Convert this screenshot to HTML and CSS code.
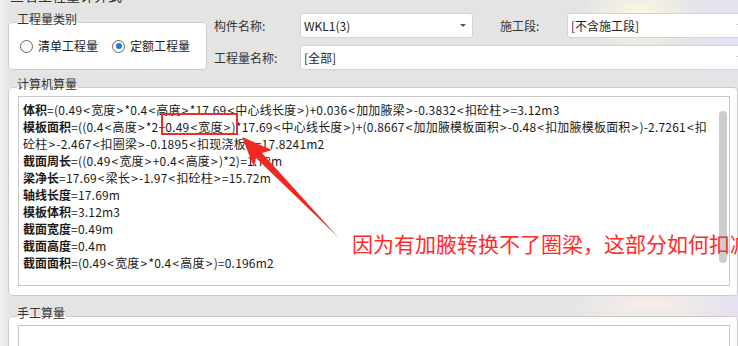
FILE: index.html
```html
<!DOCTYPE html>
<html lang="zh-CN">
<head>
<meta charset="utf-8">
<title>查看工程量计算式</title>
<link rel="stylesheet" href="styles.css">
</head>
<body>
<div class="page">
  <div class="title"><span>查看工程量计算式</span></div>
  <div class="top">
    <fieldset class="group type-group">
      <legend>工程量类别</legend>
      <div class="radios">
        <label class="radio"><span class="dot"></span>清单工程量</label>
        <label class="radio checked"><span class="dot"></span>定额工程量</label>
      </div>
    </fieldset>
    <div class="form">
      <span class="lbl">构件名称:</span>
      <div class="select"><span>WKL1(3)</span><i class="caret"></i></div>
      <span class="lbl lbl-gap">施工段:</span>
      <div class="select"><span>[不含施工段]</span><i class="caret"></i></div>
      <span class="lbl">工程量名称:</span>
      <div class="select wide"><span>[全部]</span><i class="caret"></i></div>
    </div>
  </div>

  <fieldset class="group calc">
    <legend>计算机算量</legend>
    <div class="textbox">
      <div class="lines">
        <div class="line"><b>体积</b>=(0.49<span class="ang">&lt;</span>宽度<span class="ang">&gt;</span>*0.4<span class="ang">&lt;</span>高度<span class="ang">&gt;</span>*17.69<span class="ang">&lt;</span>中心线长度<span class="ang">&gt;</span>)+0.036<span class="ang">&lt;</span>加加腋梁<span class="ang">&gt;</span>-0.3832<span class="ang">&lt;</span>扣砼柱<span class="ang">&gt;</span>=3.12m3</div>
        <div class="line"><b>模板面积</b>=((0.4<span class="ang">&lt;</span>高度<span class="ang">&gt;</span>*2+0.49<span class="ang">&lt;</span>宽度<span class="ang">&gt;</span>)*17.69<span class="ang">&lt;</span>中心线长度<span class="ang">&gt;</span>)+(0.8667<span class="ang">&lt;</span>加加腋模板面积<span class="ang">&gt;</span>-0.48<span class="ang">&lt;</span>扣加腋模板面积<span class="ang">&gt;</span>)-2.7261<span class="ang">&lt;</span>扣</div>
        <div class="line">砼柱<span class="ang">&gt;</span>-2.467<span class="ang">&lt;</span>扣圈梁<span class="ang">&gt;</span>-0.1895<span class="ang">&lt;</span>扣现浇板<span class="ang">&gt;</span>=17.8241m2</div>
        <div class="line"><b>截面周长</b>=((0.49<span class="ang">&lt;</span>宽度<span class="ang">&gt;</span>+0.4<span class="ang">&lt;</span>高度<span class="ang">&gt;</span>)*2)=1.78m</div>
        <div class="line"><b>梁净长</b>=17.69<span class="ang">&lt;</span>梁长<span class="ang">&gt;</span>-1.97<span class="ang">&lt;</span>扣砼柱<span class="ang">&gt;</span>=15.72m</div>
        <div class="line"><b>轴线长度</b>=17.69m</div>
        <div class="line"><b>模板体积</b>=3.12m3</div>
        <div class="line"><b>截面宽度</b>=0.49m</div>
        <div class="line"><b>截面高度</b>=0.4m</div>
        <div class="line"><b>截面面积</b>=(0.49<span class="ang">&lt;</span>宽度<span class="ang">&gt;</span>*0.4<span class="ang">&lt;</span>高度<span class="ang">&gt;</span>)=0.196m2</div>
      </div>
      <div class="track"><div class="thumb"></div></div>
    </div>
  </fieldset>

  <fieldset class="group manual">
    <legend>手工算量</legend>
    <div class="textbox tall"></div>
  </fieldset>

  <svg class="markup" width="738" height="346" viewBox="0 0 738 346">
    <rect x="162" y="114" width="75" height="20" fill="none" stroke="#e8302a" stroke-width="2"/>
    <polygon points="242,137 272,150 262,153 338,237 256,158 254,167" fill="#f02a22"/>
  </svg>
  <div class="note">因为有加腋转换不了圈梁，这部分如何扣减</div>
</div>
</body>
</html>
```

FILE: styles.css
```css
* { box-sizing: border-box; }

html, body {
  margin: 0;
  padding: 0;
  width: 738px;
  height: 346px;
  overflow: hidden;
}

body {
  font-family: "Noto Sans CJK SC", "Noto Sans", sans-serif;
  font-size: 12px;
  color: #222;
  background:
    radial-gradient(60px 40px at 640px 15px, rgba(255, 250, 225, 0.9), rgba(255, 250, 225, 0)),
    radial-gradient(70px 60px at 730px 30px, rgba(228, 226, 250, 0.9), rgba(228, 226, 250, 0)),
    radial-gradient(90px 20px at 650px 305px, rgba(250, 240, 235, 0.9), rgba(250, 240, 235, 0)),
    radial-gradient(50px 20px at 735px 305px, rgba(232, 222, 250, 0.9), rgba(232, 222, 250, 0)),
    linear-gradient(90deg, #f2f2f2 0, #e4e4e4 10px, #e4e4e4 100%);
}

.page {
  position: relative;
  width: 760px;
  height: 346px;
  padding-left: 8px;
}

.title {
  height: 13px;
  overflow: hidden;
}
.title span {
  display: block;
  margin-top: -12px;
  padding-left: 2px;
  font-size: 14px;
  line-height: 15px;
  color: #333;
}

.top {
  display: flex;
  gap: 7px;
  align-items: flex-start;
}

.group {
  margin: 0;
  min-width: 0;
  border: 1px solid #cbcbcb;
  border-radius: 4px;
  background: #fff;
  padding: 0 7px 9px 9px;
}
.group legend {
  padding: 0 1px 6px 0;
  margin-left: -1px;
  font-size: 12px;
  line-height: 12px;
  color: #333;
}

.type-group {
  width: 199px;
  height: 57px;
  padding-bottom: 0;
}
.radios {
  display: flex;
  align-items: center;
  height: 30px;
  padding-left: 2px;
  gap: 14px;
}
.radio {
  display: flex;
  align-items: center;
  gap: 5px;
  color: #222;
  line-height: 14px;
}
.dot {
  width: 13px;
  height: 13px;
  border: 1px solid #666;
  border-radius: 50%;
  background: #fff;
  display: flex;
  align-items: center;
  justify-content: center;
}
.checked .dot::after {
  content: "";
  width: 6px;
  height: 6px;
  border-radius: 50%;
  background: #1f7ae0;
}

.form {
  display: grid;
  grid-template-columns: 86px 173px 94px 190px;
  grid-auto-rows: 25px;
  row-gap: 7px;
  align-items: center;
}
.lbl {
  color: #333;
}
.lbl-gap {
  padding-left: 27px;
}
.select {
  height: 25px;
  background: #fff;
  border: 1px solid #d2d2d2;
  border-radius: 3px;
  display: flex;
  align-items: center;
  justify-content: space-between;
  padding: 0 6px 0 3px;
  color: #222;
  font-size: 12px;
}
.select.wide {
  grid-column: 2 / -1;
  padding-right: 13px;
}
.form .select:nth-of-type(2) {
  padding-right: 13px;
}
.caret {
  width: 0;
  height: 0;
  border-left: 3px solid transparent;
  border-right: 3px solid transparent;
  border-top: 3px solid #555;
}

.calc {
  width: 730px;
  margin-top: 8px;
}
.manual {
  width: 730px;
  margin-top: 11px;
}

.textbox {
  height: 190px;
  border: 1px solid #c8c8c8;
  background: #fff;
  display: flex;
}
.textbox.tall {
  height: 60px;
}
.lines {
  flex: 1;
  min-width: 0;
  padding: 4px 0 0 4px;
  white-space: nowrap;
  overflow: hidden;
  letter-spacing: 0.2px;
}
.line {
  height: 17px;
  line-height: 17px;
  color: #1a1a1a;
}
.line b {
  font-weight: 700;
  letter-spacing: 0;
}
.ang {
  padding: 0 1px;
}
.track {
  width: 12px;
  padding: 14px 2px 0 2px;
}
.thumb {
  width: 8px;
  height: 152px;
  border-radius: 4px;
  background: #cdcdcd;
}

.markup {
  position: absolute;
  left: 0;
  top: 0;
  pointer-events: none;
}
.note {
  position: absolute;
  left: 352px;
  top: 233px;
  font-size: 21px;
  line-height: 21px;
  color: #ff2b2b;
  white-space: nowrap;
}
```
